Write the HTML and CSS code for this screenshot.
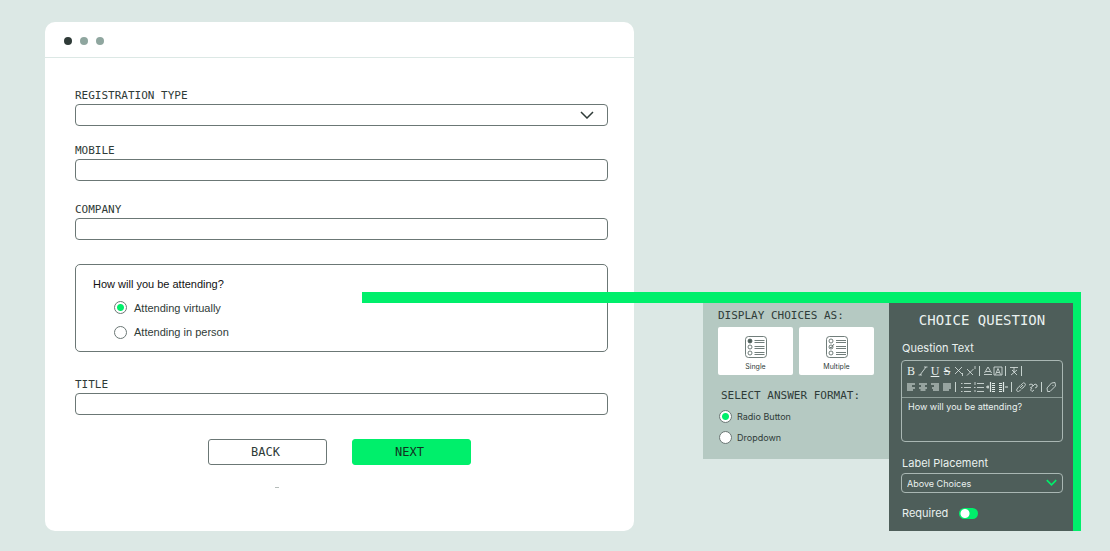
FILE: index.html
```
<!DOCTYPE html>
<html lang="en">
    <head>
        <meta charset="utf-8">
        <title>Registration form builder</title>
        <link rel="stylesheet" href="styles.css">
    </head>
    <body>
        <main class="window">
            <div class="window-bar">
                <span class="dot dark"></span>
                <span class="dot"></span>
                <span class="dot"></span>
            </div>
            <form class="reg-form">
                <div class="field">
                    <label for="regtype">REGISTRATION TYPE</label>
                    <div class="select-wrap">
                        <select id="regtype"><option></option></select>
                        <svg class="chevron" viewBox="0 0 14 8"><path d="M1 1l6 6 6-6"/></svg>
                    </div>
                </div>
                <div class="field mobile">
                    <label for="mobile">MOBILE</label>
                    <input type="text" id="mobile">
                </div>
                <div class="field company">
                    <label for="company">COMPANY</label>
                    <input type="text" id="company">
                </div>
                <fieldset class="question">
                    <legend>How will you be attending?</legend>
                    <label class="choice"><input type="radio" name="attend" checked>Attending virtually</label>
                    <label class="choice"><input type="radio" name="attend">Attending in person</label>
                </fieldset>
                <div class="field title">
                    <label for="title">TITLE</label>
                    <input type="text" id="title">
                </div>
                <div class="actions">
                    <button type="button" class="btn">BACK</button>
                    <button type="button" class="btn next">NEXT</button>
                </div>
                <div class="dash"></div>
            </form>
        </main>

        <aside class="builder">
            <section class="choices">
                <h2>DISPLAY CHOICES AS:</h2>
                <div class="tiles">
                    <button type="button" class="tile">
                        <svg viewBox="0 0 22 22">
                            <rect x="0.5" y="0.5" width="21" height="21" rx="3"/>
                            <circle class="fill" cx="5" cy="5" r="2"/><circle cx="5" cy="11" r="2"/><circle cx="5" cy="17" r="2"/>
                            <path d="M9.500 4.500h10M9.500 6.500h10M9.500 10.500h10M9.500 12.500h10M9.500 16.500h10M9.500 18.500h10"/>
                        </svg>
                        Single
                    </button>
                    <button type="button" class="tile">
                        <svg viewBox="0 0 22 22">
                            <rect x="0.5" y="0.5" width="21" height="21" rx="3"/>
                            <circle cx="5" cy="5" r="2"/><circle cx="5" cy="11" r="2"/><circle cx="5" cy="17" r="2"/>
                            <path d="M4 11l1 1 3-4M10 4.500h10M10 6.500h10M10 10.500h10M10 12.500h10M10 16.500h10M10 18.500h10"/>
                        </svg>
                        Multiple
                    </button>
                </div>
                <h2 class="format-title">SELECT ANSWER FORMAT:</h2>
                <label class="choice small"><input type="radio" name="format" checked>Radio Button</label>
                <label class="choice small"><input type="radio" name="format">Dropdown</label>
            </section>

            <section class="settings">
                <h1>CHOICE QUESTION</h1>
                <label class="caption" for="qtext">Question Text</label>
                <div class="editor">
                    <div class="toolbar">
                        <div class="tools">
                            <button type="button">B</button>
                            <button type="button" aria-label="Italic"><svg viewBox="0 0 10 10"><path d="M6 1h3.500M.5 9H4M8 1L2 9"/></svg></button>
                            <button type="button" class="under">U</button>
                            <button type="button" class="strike">S</button>
                            <button type="button" aria-label="Subscript"><svg viewBox="0 0 10 10"><path d="M1 1l7 7M8 1L1 8M8.500 7v3"/></svg></button>
                            <button type="button" aria-label="Superscript"><svg viewBox="0 0 10 10"><path d="M1 3l6 6M7.500 3L1 9.500M9 0v3"/></svg></button>
                            <i></i>
                            <button type="button" class="narrow" aria-label="Text color"><svg viewBox="0 0 10 10"><path d="M1.500 7L5 1l3.500 6M3 5.500h4M1 8.500h8"/></svg></button>
                            <button type="button" class="narrow" aria-label="Highlight"><svg viewBox="0 0 10 10"><path d="M1 1h8v8H1zM2.500 8.500L5 2.500l2.500 6M3.500 6.500h3"/></svg></button>
                            <i></i>
                            <button type="button" class="narrow" aria-label="Clear format"><svg viewBox="0 0 10 10"><path d="M1 1.500h8M5 1.500V6M2 9l6-5M3 4l5 5"/></svg></button>
                            <i></i>
                        </div>
                        <div class="tools">
                            <button type="button" aria-label="Align left"><svg viewBox="0 0 10 10"><path class="bold" d="M1 2h8M1 4h5M1 6h8M1 8h6"/></svg></button>
                            <button type="button" aria-label="Center"><svg viewBox="0 0 10 10"><path class="bold" d="M1 2h8M3 4h4M1 6h8M2.500 8h5"/></svg></button>
                            <button type="button" aria-label="Align right"><svg viewBox="0 0 10 10"><path class="bold" d="M1 2h8M4 4h5M2 6h7M3 8h6"/></svg></button>
                            <button type="button" aria-label="Justify"><svg viewBox="0 0 10 10"><path class="bold" d="M1 2h8M1 4h8M1 6h8M1 8h6"/></svg></button>
                            <i></i>
                            <button type="button" class="list" aria-label="Bullets"><svg viewBox="0 0 10 10"><path d="M0 1.500h1.500M3 1.500h7M0 5.500h1.500M3 5.500h7M0 9.500h1.500M3 9.500h7"/></svg></button>
                            <button type="button" class="list" aria-label="Numbers"><svg viewBox="0 0 10 10"><path d="M1 0v3M3 1.500h7M0 5.500h1.500M3 5.500h7M1 8v2M3 9.500h7"/></svg></button>
                            <button type="button" aria-label="Outdent"><svg viewBox="0 0 10 10"><path d="M0 5h3M2 3.500v3M4.500 0v10M6 1.500h3M6 3.500h3M6 5.500h3M6 7.500h3M6 9.500h3" class="bold"/></svg></button>
                            <button type="button" aria-label="Indent"><svg viewBox="0 0 10 10"><path class="bold" d="M1 1.500h3M1 3.500h3M1 5.500h3M1 7.500h3M1 9.500h3M5.500 0v10M7 5h3"/></svg></button>
                            <i></i>
                            <button type="button" aria-label="Link"><svg viewBox="0 0 10 10"><path d="M4 6l3-3M5 3l1.500-1.500a1.500 1.500 0 0 1 2.500 2L7 6 5.500 6.500M4.500 3.500L3 4.500 1 7a1.500 1.500 0 0 0 2.500 2L5 7.500"/></svg></button>
                            <button type="button" aria-label="Unlink"><svg viewBox="0 0 10 10"><path d="M1 3l2-1 2 1-1 2-2 1M5 4l2-2 2 1v2L7 6M4 6L2.500 8 4 9.500 6 8"/></svg></button>
                            <i></i>
                            <button type="button" aria-label="Tag"><svg viewBox="0 0 10 10"><path d="M1 6l4.500-5L9 .5 9.500 4 4 9.500H1.500zM6.500 3l1 1"/></svg></button>
                        </div>
                    </div>
                    <textarea id="qtext">How will you be attending?</textarea>
                </div>
                <label class="caption" for="placement">Label Placement</label>
                <div class="select-wrap placement">
                    <select id="placement"><option>Above Choices</option></select>
                    <svg class="chevron" viewBox="0 0 14 8"><path d="M1 1l6 6 6-6"/></svg>
                </div>
                <label class="required">Required <input type="checkbox" class="toggle" checked></label>
            </section>
        </aside>
    </body>
</html>
```

FILE: styles.css
```
* {
  box-sizing: border-box;
}

body {
  margin: 0;
  min-height: 100vh;
  padding: 22px 29px 20px 45px;
  display: flex;
  gap: 69px;
  background-color: #dce8e5;
  color: #2f3b38;
  font-family: Inter, "Liberation Sans", sans-serif;
}

button, input, select, textarea {
  font-family: inherit;
  color: inherit;
  margin: 0;
}

h1, h2 {
  margin: 0;
  font-weight: normal;
  font-family: "DejaVu Sans Mono", monospace;
}

/* browser window with the form */
.window {
  flex: 1;
  background-color: white;
  border-radius: 10px;
}

.window-bar {
  display: flex;
  align-items: center;
  gap: 8px;
  height: 36px;
  padding: 2px 19px 0;
  border-bottom: 1px solid #dce8e5;
}

.dot {
  width: 8px;
  height: 8px;
  border-radius: 50%;
  background-color: #8fa69f;
}

.dot.dark {
  background-color: #2f3b38;
}

.reg-form {
  padding: 29px 26px 20px 30px;
}

.field label {
  display: block;
  height: 17px;
  line-height: 18px;
  font-family: "DejaVu Sans Mono", monospace;
  font-size: 11px;
}

.field input, .field select {
  display: block;
  width: 100%;
  height: 22px;
  border: 1px solid #6b7775;
  border-radius: 4px;
  background-color: white;
}

.mobile {
  margin-top: 16px;
}

.company {
  margin-top: 20px;
}

.title {
  margin-top: 24px;
}

select {
  appearance: none;
}

.select-wrap {
  position: relative;
}

.chevron {
  position: absolute;
  right: 14px;
  top: 7px;
  width: 14px;
  height: 8px;
  fill: none;
  stroke: #2f3b38;
  stroke-width: 1.5;
  pointer-events: none;
}

.question {
  margin: 24px 0 0;
  height: 88px;
  padding: 11px 17px;
  border: 1px solid #6b7775;
  border-radius: 5px;
  font-family: "Liberation Sans", sans-serif;
}

.question legend {
  float: left;
  width: 100%;
  padding: 0;
  font-size: 11px;
  line-height: 16px;
  color: #111;
}

.choice {
  display: flex;
  align-items: center;
  gap: 7px;
  clear: both;
  height: 24px;
  margin-left: 21px;
  font-size: 11px;
}

.question legend + .choice {
  padding-top: 3px;
  height: 28px;
}

input[type=radio] {
  appearance: none;
  width: 13px;
  height: 13px;
  border: 1px solid #6b7775;
  border-radius: 50%;
  background-color: white;
}

input[type=radio]:checked {
  background-image: radial-gradient(circle, #00ef6b 3px, transparent 4px);
}

.actions {
  display: flex;
  justify-content: center;
  gap: 25px;
  margin-top: 24px;
  padding-right: 4px;
}

.btn {
  width: 119px;
  height: 26px;
  padding: 0 4px 0 0;
  border: 1px solid #6b7775;
  border-radius: 3px;
  background-color: white;
  font-family: "DejaVu Sans Mono", monospace;
  font-size: 12px;
}

.btn.next {
  border-color: #00ef6b;
  background-color: #00ef6b;
  color: #12301f;
}

.dash {
  width: 4px;
  height: 1px;
  margin: 22px 0 0 200px;
  background-color: #b5bcba;
}

/* builder panels with the green connector */
.builder {
  position: relative;
  align-self: flex-end;
  display: flex;
  align-items: flex-start;
  width: 378px;
  border-top: 11px solid #00ef6b;
  border-right: 8px solid #00ef6b;
}

.builder::before {
  content: "";
  position: absolute;
  top: -11px;
  left: -341px;
  width: 341px;
  height: 11px;
  background-color: #00ef6b;
}

.choices {
  flex: 1;
  height: 156px;
  padding: 5px 15px;
  background-color: #b5c9c2;
}

.choices h2 {
  font-size: 11px;
  line-height: 16px;
  white-space: nowrap;
}

.tiles {
  display: flex;
  gap: 6px;
  margin-top: 3px;
}

.tile {
  display: flex;
  flex-direction: column;
  align-items: center;
  gap: 3px;
  flex: 1;
  height: 48px;
  padding: 9px 0 0;
  border: none;
  border-radius: 2px;
  background-color: white;
  font-size: 7px;
  line-height: 12px;
}

.tile svg {
  width: 22px;
  height: 22px;
  flex: none;
  fill: none;
  stroke: #4d5d59;
  stroke-width: 0.8;
}

.tile .fill {
  fill: #4d5d59;
}

.choices .format-title {
  margin: 13px 0 2px 3px;
}

.choice.small {
  height: 21px;
  gap: 5px;
  margin-left: 1px;
  font-size: 9px;
}

.settings {
  width: 184px;
  height: 228px;
  padding: 8px 10px 0 12px;
  background-color: #4e5e5a;
  color: #eaf1ef;
}

.settings h1 {
  font-size: 14px;
  line-height: 18px;
  text-align: center;
  white-space: nowrap;
}

.caption {
  display: block;
  margin: 10px 0 3px 1px;
  font-size: 11px;
  line-height: 18px;
}

.editor {
  height: 82px;
  margin: 0;
  border: 1px solid #a9b7b3;
  border-radius: 4px;
}

.toolbar {
  height: 37px;
  padding: 2px 3px 0;
  border-bottom: 1px solid #8d9d98;
}

.tools {
  display: flex;
  align-items: center;
  height: 16px;
}

.tools button {
  display: flex;
  justify-content: center;
  align-items: center;
  flex: none;
  width: 12px;
  height: 14px;
  padding: 0;
  border: none;
  background: none;
  font-family: "Liberation Serif", serif;
  font-size: 12px;
  line-height: 14px;
}

.tools .narrow {
  width: 10px;
}

.tools .list {
  width: 13px;
}

.tools i {
  width: 1px;
  height: 10px;
  margin: 0 3px 0 2px;
  background-color: #c6d2ce;
}

.tools svg {
  width: 10px;
  height: 10px;
  fill: none;
  stroke: #e0e9e6;
  stroke-width: 0.8;
}

.tools .bold {
  stroke-width: 1.2;
}

.tools .under {
  text-decoration: underline;
}

.tools .strike {
  text-decoration: line-through;
}

textarea {
  display: block;
  width: 100%;
  height: 42px;
  padding: 3px 6px;
  border: none;
  background: none;
  resize: none;
  font-size: 9px;
  line-height: 12px;
}

.editor + .caption {
  margin-top: 12px;
  margin-bottom: 1px;
}

.placement select {
  display: block;
  width: 100%;
  height: 20px;
  padding: 0 5px;
  border: 1px solid #a9b7b3;
  border-radius: 4px;
  background: none;
  font-size: 9px;
}

.placement .chevron {
  right: 6px;
  top: 6px;
  width: 11px;
  height: 7px;
  stroke: #00ef6b;
  stroke-width: 2;
}

.required {
  display: flex;
  align-items: center;
  gap: 11px;
  margin: 11px 0 0 1px;
  font-size: 11px;
  line-height: 18px;
}

.toggle {
  appearance: none;
  width: 19px;
  height: 11px;
  border-radius: 6px;
  background: radial-gradient(circle at 6px 50%, white 4px, transparent 5px) #00ef6b;
}
```
